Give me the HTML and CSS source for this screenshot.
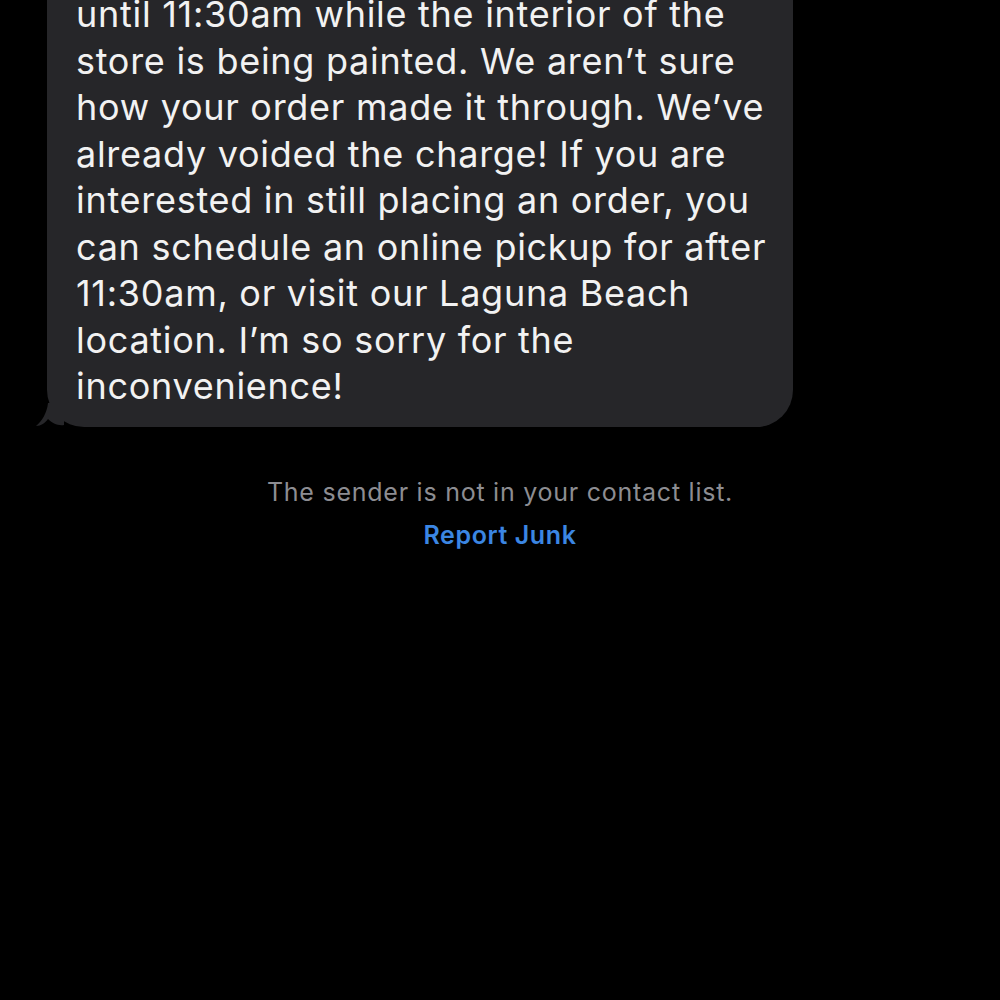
FILE: index.html
```html
<!DOCTYPE html>
<html>
<head>
<meta charset="utf-8">
<link rel="stylesheet" href="styles.css">
</head>
<body>
<main class="thread">
  <div class="msg-row">
    <div class="bubble">
      <p class="bubble-text">until 11:30am while the interior of the<br>store is being painted. We aren’t sure<br>how your order made it through. We’ve<br>already voided the charge! If you are<br>interested in still placing an order, you<br>can schedule an online pickup for after<br>11:30am, or visit our Laguna Beach<br>location. I’m so sorry for the<br>inconvenience!</p>
      <svg class="tail" width="28" height="24" viewBox="0 0 28 24" aria-hidden="true">
        <path d="M12 0 L28 0 L28 22 C22 23 16 20 12 16 C9 20 5 23 0 23 C6 18 11 10 12 0 Z" fill="#262629"/>
      </svg>
    </div>
  </div>
  <div class="notice">
    <p class="notice-text">The sender is not in your contact list.</p>
    <a class="notice-link" href="#">Report Junk</a>
  </div>
</main>
</body>
</html>
```
FILE: styles.css
```css
html, body {
  margin: 0;
  padding: 0;
  background: #000;
  height: 100%;
}
body {
  font-family: Inter, "Noto Sans", sans-serif;
  overflow: hidden;
}
.thread {
  margin-top: -40px;
}
.msg-row {
  display: flex;
  padding-left: 47px;
}
.bubble {
  position: relative;
  width: 746px;
  background: #262629;
  border-radius: 37px;
  box-sizing: border-box;
  padding: 31px 20px 17px 29px;
}
.bubble-text {
  margin: 0;
  color: #f2f2f2;
  font-size: 36px;
  line-height: 46.5px;
  letter-spacing: 0.72px;
  white-space: nowrap;
}
.tail {
  position: absolute;
  left: -11px;
  bottom: 0;
}
.notice {
  display: flex;
  flex-direction: column;
  align-items: center;
  padding-top: 50px;
  gap: 13px;
}
.notice-text {
  margin: 0;
  color: #8d8d92;
  font-size: 25px;
  line-height: 30px;
  letter-spacing: 0.75px;
}
.notice-link {
  color: #3b86e3;
  font-size: 25px;
  line-height: 30px;
  letter-spacing: 0.6px;
  font-weight: 600;
  text-decoration: none;
}
```
